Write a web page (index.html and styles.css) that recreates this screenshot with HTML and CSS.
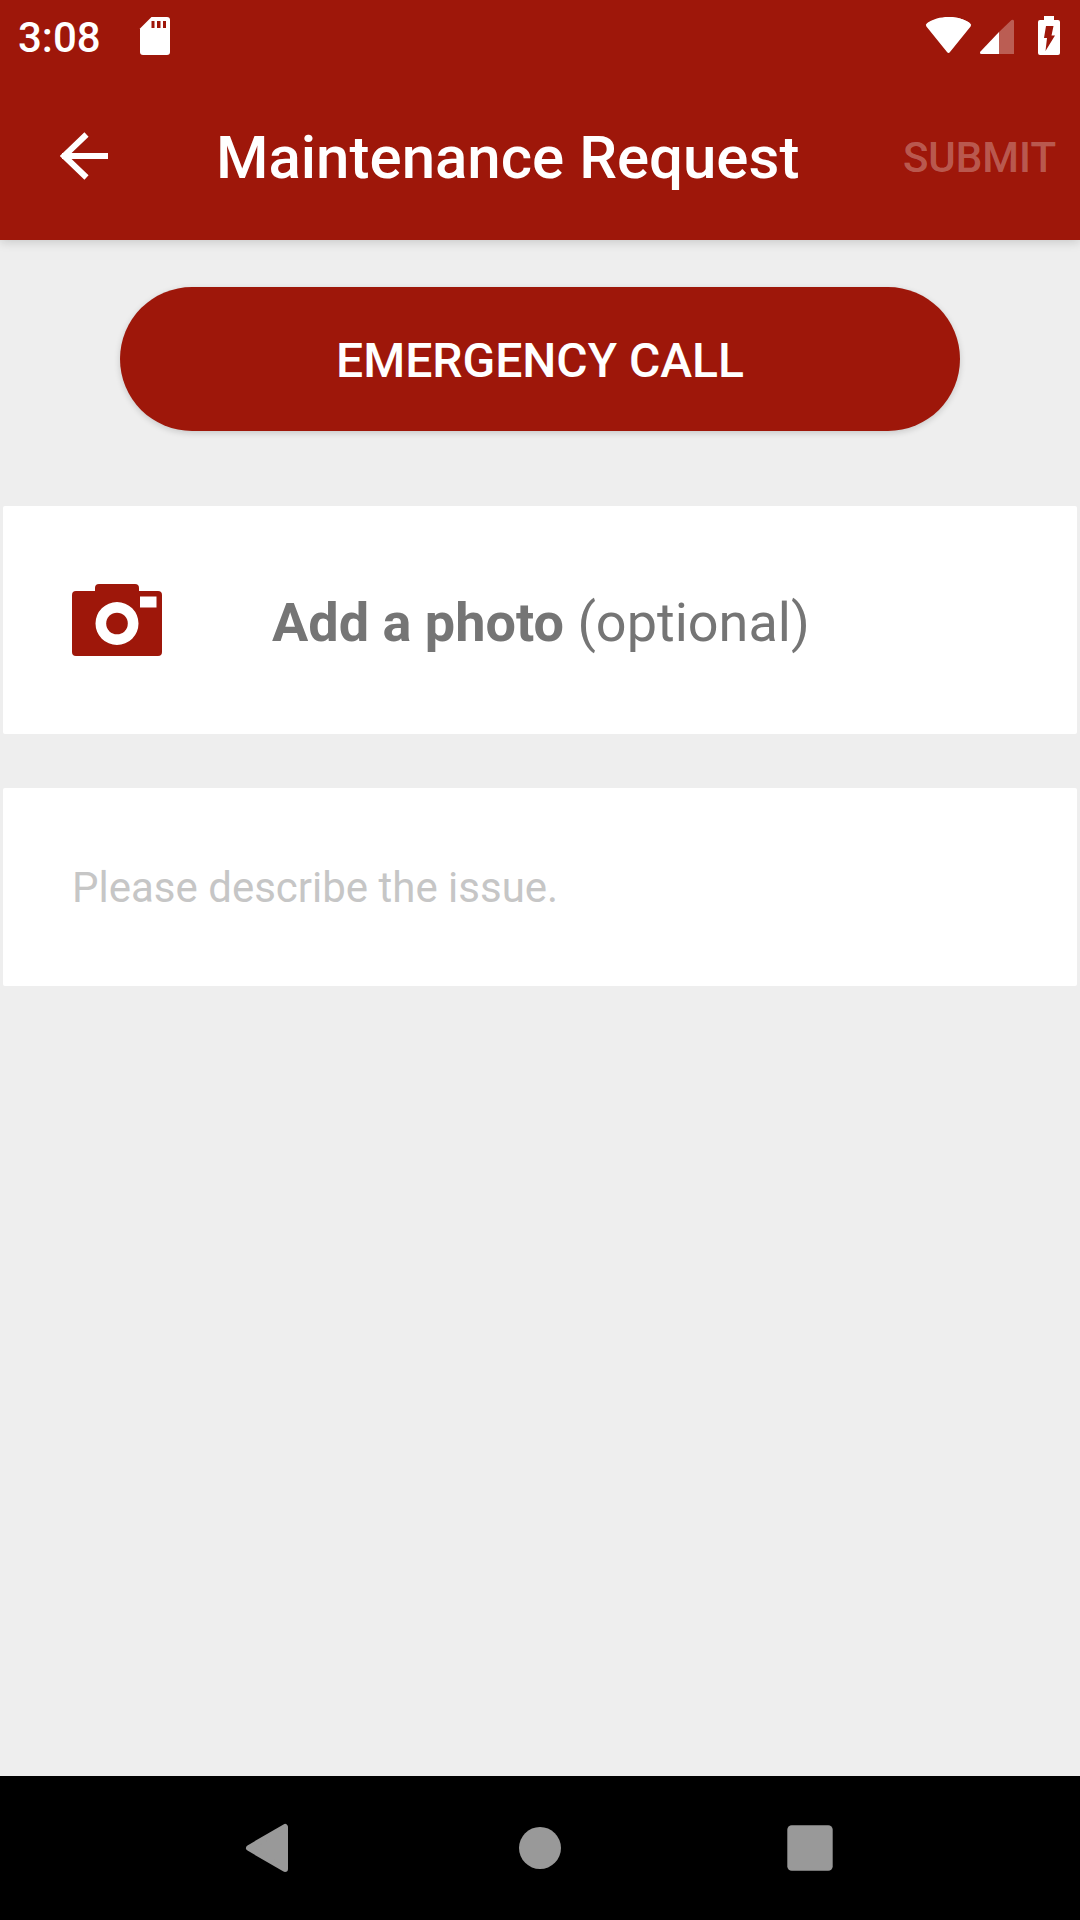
FILE: index.html
```html
<!DOCTYPE html>
<html lang="en">
<head>
<meta charset="utf-8">
<meta name="viewport" content="width=device-width, initial-scale=1">
<title>Maintenance Request</title>
<link rel="stylesheet" href="styles.css">
</head>
<body>
<header class="header">
  <div class="status-bar">
    <time class="clock">3:08</time>
    <svg class="status-sd" viewBox="0 0 32 40" aria-hidden="true">
      <path fill="#fff" d="M12.500 1H28q3 0 3 3V36q0 3-3 3H4q-3 0-3-3V12.500Z"/>
      <path fill="#9e170a" d="M12.500 5h3v7h-3zM18 5h3.500v7H18zM24 5h3v7h-3z"/>
    </svg>
    <svg class="status-wifi" viewBox="0 0 48 40" aria-hidden="true">
      <path fill="#fff" d="M24.500 1C33.500 1 40.500 3.500 46 7.200q2 1.500.6 3.300L26 36q-1.500 2-3 0L2.400 10.500Q1 8.700 3 7.200 8.500 3.500 24.500 1Z"/>
      <path fill="#fff" d="M3 7.200C9 3 16 1 24.500 1S40 3 46 7.200L24.500 20Z"/>
    </svg>
    <svg class="status-signal" viewBox="0 0 36 40" aria-hidden="true">
      <path fill="#fff" d="M20 16V38H2.500q-2.500-.5-1-2.500Z"/>
      <path fill="#fff" fill-opacity=".3" d="M20 16 32.500 4q2-1 2.500 1V38H20Z"/>
    </svg>
    <svg class="status-battery" viewBox="0 0 24 40" aria-hidden="true">
      <path fill="#fff" d="M7 0H17V4h4q2 0 2 2V37q0 2-2 2H3q-2 0-2-2V6q0-2 2-2h4Z"/>
      <path fill="#9e170a" d="M9 10H16.500l-2 9.500H18L8.500 35l1.500-13H7Z"/>
    </svg>
  </div>
  <div class="app-bar">
    <button class="back-button" type="button" aria-label="Back">
      <svg class="back-icon" viewBox="0 0 48 52" aria-hidden="true">
        <path d="M26.500 2.500 4 24 26.500 45.500M2 24H48" fill="none" stroke="#fff" stroke-width="6"/>
      </svg>
    </button>
    <h1 class="title">Maintenance Request</h1>
    <button class="submit-button" type="submit" form="request-form" disabled>SUBMIT</button>
  </div>
</header>
<main class="content">
  <button class="emergency-button" type="button">EMERGENCY CALL</button>
  <form class="request-form" id="request-form">
    <button class="card photo-card" type="button">
      <svg class="camera-icon" viewBox="0 0 90 72" aria-hidden="true">
        <path fill="#9e170a" fill-rule="evenodd" d="M27 0H63q4 0 4 4V7H86q4 0 4 4V68q0 4-4 4H4q-4 0-4-4V11Q0 7 4 7H23V4q0-4 4-4ZM68 12.500V23.500H84.500V12.500ZM45 18a21.500 21.500 0 1 0 0 43 21.500 21.500 0 1 0 0-43Z"/>
        <circle cx="45" cy="39.500" r="10.800" fill="#9e170a"/>
      </svg>
      <span class="photo-label"><strong>Add a photo</strong> (optional)</span>
    </button>
    <textarea class="card issue-field" rows="1" aria-label="Issue description" placeholder="Please describe the issue."></textarea>
  </form>
</main>
<nav class="nav-bar" aria-label="System navigation">
  <button class="nav-button" type="button" aria-label="Back">
    <svg class="nav-icon" viewBox="0 0 72 72" aria-hidden="true"><path d="M15 36 51 15V57Z" fill="#999" stroke="#999" stroke-width="6" stroke-linejoin="round"/></svg>
  </button>
  <button class="nav-button" type="button" aria-label="Home">
    <svg class="nav-icon" viewBox="0 0 72 72" aria-hidden="true"><circle cx="36" cy="36" r="21" fill="#999"/></svg>
  </button>
  <button class="nav-button" type="button" aria-label="Recent apps">
    <svg class="nav-icon" viewBox="0 0 72 72" aria-hidden="true"><rect x="13.300" y="13.300" width="45.400" height="45.400" rx="4.500" fill="#999"/></svg>
  </button>
</nav>
</body>
</html>
```
FILE: styles.css
```css
* {
  box-sizing: border-box;
}

body {
  display: flex;
  flex-direction: column;
  min-height: 100vh;
  margin: 0;
  background: #eee;
  font-family: Roboto, "Liberation Sans", sans-serif;
}

button,
textarea {
  margin: 0;
  border: 0;
  padding: 0;
  background: none;
  font-family: inherit;
}

svg {
  display: block;
  flex: none;
}

.header {
  background: #9e170a;
  box-shadow: 0 2px 10px rgba(0, 0, 0, 0.16);
  color: #fff;
}

.status-bar {
  display: flex;
  align-items: flex-start;
  height: 72px;
  padding: 16px 19px 0 18px;
}

.clock {
  margin-right: 38px;
  font-size: 42px;
  font-weight: 500;
  line-height: 44px;
}

.status-sd {
  width: 32px;
  height: 40px;
  margin-right: auto;
}

.status-wifi {
  width: 48px;
  height: 40px;
  margin-right: 7px;
}

.status-signal {
  width: 36px;
  height: 40px;
  margin-right: 22px;
}

.status-battery {
  width: 24px;
  height: 40px;
}

.app-bar {
  display: flex;
  align-items: center;
  height: 168px;
  padding: 4px 24px 0 0;
}

.back-button {
  display: flex;
  align-items: center;
  justify-content: center;
  width: 168px;
  height: 160px;
}

.back-icon {
  width: 48px;
  height: 52px;
}

.title {
  flex: 1;
  margin: 0 0 0 48px;
  font-size: 60px;
  font-weight: 500;
  line-height: 72px;
}

.submit-button {
  color: rgba(255, 255, 255, 0.3);
  font-size: 42px;
  font-weight: 500;
  line-height: 48px;
}

.content {
  display: flex;
  flex: 1;
  flex-direction: column;
  padding: 47px 3px;
}

.emergency-button {
  height: 144px;
  margin: 0 117px 75px;
  padding-top: 3px;
  border-radius: 72px;
  background: #9e170a;
  box-shadow: 0 2px 6px rgba(0, 0, 0, 0.16);
  color: #fff;
  font-size: 48px;
  font-weight: 500;
}

.request-form {
  display: flex;
  flex-direction: column;
  gap: 54px;
}

.card {
  border-radius: 2px;
  background: #fff;
}

.photo-card {
  display: flex;
  align-items: center;
  gap: 110px;
  padding: 78px 69px;
  color: #757575;
  text-align: left;
}

.camera-icon {
  width: 90px;
  height: 72px;
}

.photo-label {
  padding-top: 6px;
  font-size: 54px;
  line-height: 64px;
}

.issue-field {
  display: block;
  height: 198px;
  padding: 76px 69px 74px;
  color: #757575;
  font-size: 42px;
  line-height: 48px;
  outline: 0;
  resize: none;
}

.issue-field::placeholder {
  color: #c6c6c6;
  opacity: 1;
}

.nav-bar {
  display: flex;
  justify-content: center;
  height: 144px;
  background: #000;
}

.nav-button {
  display: flex;
  align-items: center;
  justify-content: center;
  width: 25%;
}

.nav-icon {
  width: 72px;
  height: 72px;
}
```
